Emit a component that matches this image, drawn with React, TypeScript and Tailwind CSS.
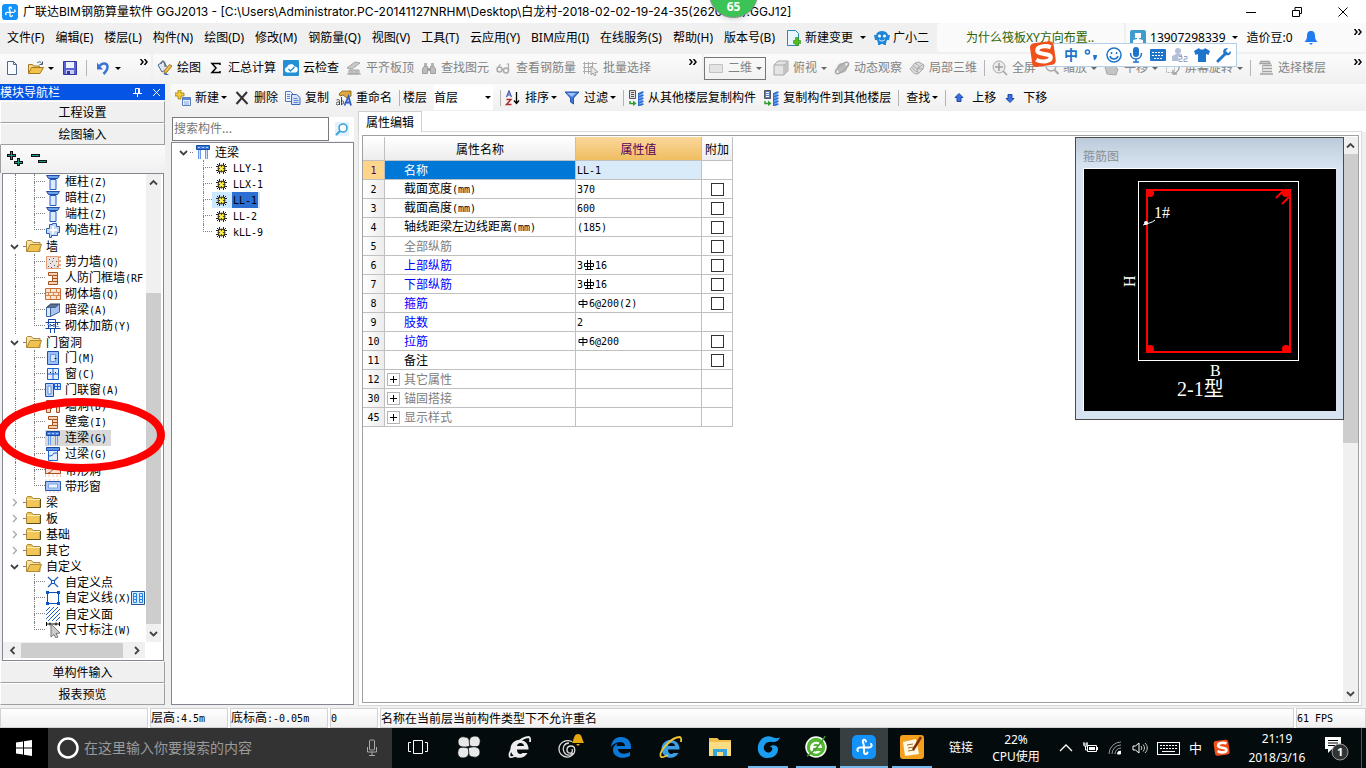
import React from 'react';

const UI = 'font-["Noto_Sans","Noto_Sans_CJK_SC",sans-serif]';
const SONG = 'font-["Noto_Sans_CJK_SC",sans-serif]';

// Half-width characters take exactly half of a 12px ideograph
const Song = ({ children }: { children: string }) => (
  <span className="whitespace-pre">
    {children.split(/([\x20-\x7e]+)/).map((part, i) =>
      i % 2 ? (
        <span key={i} className="font-['DejaVu_Sans_Mono',monospace] text-[10px]">
          {part}
        </span>
      ) : (
        part
      )
    )}
  </span>
);

type IconProps = { className?: string };

const Svg = ({ className = 'w-4 h-4', children, box = '0 0 16 16' }: IconProps & { children: React.ReactNode; box?: string }) => (
  <svg viewBox={box} className={`${className} shrink-0`} fill="none" aria-hidden="true">
    {children}
  </svg>
);

const Caret = ({ gray = false }: { gray?: boolean }) => (
  <Svg className="w-[6px] h-[3px]" box="0 0 6 3">
    <path d="M0 0h6L3 3z" fill={gray ? '#666' : '#000'} />
  </Svg>
);

const More = () => (
  <Svg className="w-[8px] h-[6px]" box="0 0 8 6">
    <path d="M.5 0l2.500 3-2.500 3M4.500 0l2.500 3-2.500 3" stroke="#000" strokeWidth="1.500" />
  </Svg>
);

const Sep = () => <span className="h-4 w-px shrink-0 bg-[#b4b4b4]" />;

/* ---------- toolbar icons ---------- */

const AppLogo = ({ className }: IconProps) => (
  <Svg className={className} box="0 0 24 24">
    <rect width="24" height="24" rx="5" fill="#1392fb" />
    <path d="M14 6.500c-.5-3-4-2-3 1 1 2 1 3 1 4.500v5c0 2.500 3 2.500 3.500.5M12 12.500H8c-2.500 0-3.500 2.500-2 3.500M12 12.500h5c2.500 0 3.500-2 2-3.500" stroke="#fff" strokeWidth="2" strokeLinecap="round" />
  </Svg>
);

const NewFileIcon = () => (
  <Svg>
    <path d="M3.500 1.500h6l3 3v10h-9z" fill="#f7fbff" stroke="#53678f" />
    <path d="M9.500 1.500v3h3" stroke="#53678f" />
  </Svg>
);

const OpenIcon = () => (
  <Svg>
    <path d="M.5 13.500v-9h4l1 1.500h6v2" fill="#f6d98a" stroke="#a87a1d" />
    <path d="M.5 13.500l3-6h12l-3.500 6z" fill="#f2c14e" stroke="#a87a1d" />
    <path d="M9 3c2-2 4-1 5 1M14.500 1.500v3h-3" stroke="#445a78" />
  </Svg>
);

const SaveIcon = () => (
  <Svg>
    <path d="M1.500 1.500h13v13h-13z" fill="#5b62d2" stroke="#32389c" />
    <path d="M4 2h8v6H4z" fill="#eef1ff" />
    <path d="M4 10h8v4H4z" fill="#c9cdf4" />
    <path d="M5 11h3v3H5z" fill="#32389c" />
  </Svg>
);

const UndoIcon = () => (
  <Svg>
    <path d="M4.500 6c3-4 8-3 8 1 0 3-2 5-4 7" stroke="#3b74d6" strokeWidth="2.500" />
    <path d="M2 2.500v7h6z" fill="#3b74d6" />
  </Svg>
);

const DrawIcon = () => (
  <Svg>
    <path d="M1 5l5-3.500L11 8l-6 4z" fill="#dfe8f2" stroke="#4f6885" />
    <path d="M4 4c0-4 4-4 4 0v3" stroke="#344a66" />
    <path d="M15 6l-5 6-3 2 .5-3.500 5-6z" fill="#f0bf4c" stroke="#a27a21" />
    <path d="M7 14l2-1 3 2H8z" fill="#2d6cc9" />
  </Svg>
);

const CloudIcon = () => (
  <Svg>
    <rect width="16" height="16" rx="1" fill="#238fd5" />
    <path d="M4 12.500a2.800 2.800 0 010-5.500 4 4 0 017.500-.5A3 3 0 0112 12.500z" fill="#fff" />
    <path d="M5.500 9l2 2 4-4" stroke="#238fd5" strokeWidth="1.500" />
  </Svg>
);

const AlignSlabIcon = () => (
  <Svg>
    <path d="M1 8l8-6 5 1-8 6zM3 10h10v4H3z" fill="#c9c9c9" stroke="#a5a5a5" />
    <path d="M1 14h14M6 10v4M10 10v4" stroke="#a5a5a5" />
  </Svg>
);

const BinocularsIcon = () => (
  <Svg>
    <path d="M3 3h3v4H3zM10 3h3v4h-3z" fill="#b5b5b5" />
    <path d="M1.500 13.500V9L3 6.500h3.500v7zM9.500 13.500v-7H13L14.500 9v4.500z" fill="#bdbdbd" stroke="#a0a0a0" />
    <path d="M6.500 8h3v3h-3z" fill="#a0a0a0" />
  </Svg>
);

const GlassesIcon = () => (
  <Svg>
    <circle cx="3.500" cy="9.500" r="2.500" stroke="#aaa" strokeWidth="1.500" />
    <circle cx="10" cy="10.500" r="2.500" stroke="#aaa" strokeWidth="1.500" />
    <path d="M1.500 8l3-4M12.500 10V4h-2M6 9.500h1.500" stroke="#aaa" strokeWidth="1.200" />
  </Svg>
);

const BatchIcon = () => (
  <Svg>
    <path d="M1.500 2v12M5.500 2v12M9.500 2v6M0 3.500h14M0 7.500h10M0 11.500h8" stroke="#ababab" />
    <path d="M8 6l7 6-3 .5 1 2.500-2 .5-1-2.500-2 2z" fill="#e6e6e6" stroke="#a2a2a2" />
  </Svg>
);

const PlaneIcon = () => (
  <Svg>
    <path d="M1.500 4.500h13v8h-13z" fill="#e3e3e3" stroke="#c2c2c2" />
  </Svg>
);

const CubeIcon = () => (
  <Svg>
    <path d="M1 5l4-4h10v10l-4 4H1z" fill="#e4e4e4" stroke="#a9a9a9" />
    <path d="M1 5h10v10M11 5l4-4" stroke="#a9a9a9" />
    <path d="M11 5l4-4v10l-4 4z" fill="#c2c2c2" />
  </Svg>
);

const OrbitIcon = () => (
  <Svg>
    <circle cx="8" cy="8" r="5" fill="#bcbcbc" />
    <ellipse cx="8" cy="8" rx="8" ry="3" stroke="#a6a6a6" strokeWidth="1.500" transform="rotate(-40 8 8)" />
  </Svg>
);

const Local3dIcon = () => (
  <Svg>
    <path d="M1 9l5-6 4-1 5 3-1 4-5 5-4-.5z" fill="#dcdcdc" stroke="#a9a9a9" />
    <path d="M4 6l4 2.500 6 .5M8 8.500l1 5M8 8.500l6-4M3 8l5 4M6 3l5 4" stroke="#a9a9a9" />
  </Svg>
);

const FullIcon = () => (
  <Svg>
    <circle cx="7" cy="7" r="6" fill="#ececec" stroke="#a9a9a9" />
    <path d="M7 3v8M3 7h8M11 11l4 4" stroke="#a0a0a0" strokeWidth="1.500" />
  </Svg>
);

const ZoomIcon = () => (
  <Svg>
    <circle cx="8" cy="6" r="5" stroke="#a9a9a9" strokeWidth="1.500" />
    <path d="M11.500 10l4 4" stroke="#a9a9a9" strokeWidth="2" />
  </Svg>
);

const HandIcon = () => (
  <Svg>
    <path d="M3 14L1 7l3-1V2h2v4l1-5h2v5l2-4 2 1-1 5 2 1-2 6z" fill="#c4c4c4" stroke="#a9a9a9" />
  </Svg>
);

const RotateIcon = () => (
  <Svg>
    <path d="M1.500 1.500h8v11h-8z" stroke="#b5b5b5" strokeDasharray="2 1" />
    <path d="M12 2c4 5 2 10-4 12M8 10v4h4" stroke="#a3a3a3" strokeWidth="1.500" />
  </Svg>
);

const FloorsIcon = () => (
  <Svg>
    <path d="M3 1.500h8l1 2H2zM5 5.500h9M5 8.500h9M5 11.500h9M2 14h13" stroke="#a3a3a3" strokeWidth="1.500" />
    <path d="M4.500 5v9" stroke="#b8b8b8" />
  </Svg>
);

const AddIcon = () => (
  <Svg>
    <path d="M3 0h3v3h3v3H6v3H3V6H0V3h3z" fill="#f2cc3a" stroke="#8d7310" strokeWidth=".7" />
    <path d="M7.500 7.500h8v8h-8z" fill="#eaf2ff" stroke="#5a7fc0" />
    <path d="M8 8h7v2H8z" fill="#5a8be0" />
    <path d="M9 12h5M9 14h5" stroke="#89a5d4" />
  </Svg>
);

const DeleteIcon = () => (
  <Svg>
    <path d="M2.500 2l11 12M13 2L2.500 14" stroke="#333" strokeWidth="2" />
  </Svg>
);

const CopyIcon = () => (
  <Svg>
    <path d="M.5 1.500h5l3 3v7h-8z" fill="#eef4ff" stroke="#5577b8" />
    <path d="M6.500 4.500h5l3.500 3v7H6.500z" fill="#d4e3fb" stroke="#3f69b8" />
    <path d="M8.500 8.500h4M8.500 10.500h5M8.500 12.500h5M2 4.500h3M2 6.500h3M2 8.500h3" stroke="#5b86cf" />
  </Svg>
);

const RenameIcon = () => (
  <Svg>
    <path d="M3 4l3-3h9v5l-4 2-4-3-3 1z" fill="#e0a83c" stroke="#7a5616" strokeWidth=".8" />
    <path d="M8.500 15.500l4-9 2.500 9M9.500 12.500H14" stroke="#2d5fc4" strokeWidth="1.800" />
    <path d="M.5 10c3-1 3 0 3 1.500v3.500M3.500 12c-3 0-4 1-3 2.500 1 1 2 0 3-1M5.500 7v8M5.500 11c3-1 3 3 0 3.500" stroke="#444" />
  </Svg>
);

const SortIcon = () => (
  <Svg>
    <path d="M1.500 7L4 1l2.500 6M2.500 5h3" stroke="#3d4fae" strokeWidth="1.200" />
    <path d="M1.500 9.500H6l-4.500 5h5" stroke="#b02c2c" strokeWidth="1.400" />
    <path d="M11.500 2v11M9 10.500l2.500 3 2.500-3" stroke="#000" strokeWidth="1.300" />
  </Svg>
);

const FilterIcon = () => (
  <Svg>
    <path d="M1 2h14L9.500 8v6l-3-2V8z" fill="#3f78dd" stroke="#2a56a8" />
    <path d="M3 3h9L8 7z" fill="#9dc1f8" />
  </Svg>
);

const FloorCopyIcon = ({ blue = false }: { blue?: boolean }) => (
  <Svg>
    <path d="M1.500.5h6v8h-6z" fill={blue ? '#4d7fd6' : '#e1e1e1'} stroke="#555" />
    <path d="M3 2.500h3M3 4.500h3M3 6.500h3" stroke={blue ? '#fff' : '#555'} />
    <path d="M2 11v2.500h3" stroke="#2f9b31" strokeWidth="1.500" />
    <path d="M5 10.500l3.500 3-3.500 2.500z" fill="#2f9b31" />
    <path d="M11 2.500l3.500-1.500v14L11 16z" fill="#7fb0f2" />
    <path d="M10.500 4l5-2M10.500 7l5-2M10.500 10l5-2M10.500 13l5-2M10.500 15.500l5-1.500" stroke="#2f6fd0" strokeWidth="1.600" />
    <path d="M10.500 3v13" stroke="#2f6fd0" />
  </Svg>
);

const ArrowIcon = ({ down = false }: { down?: boolean }) => (
  <Svg className={down ? 'w-3 h-3 rotate-180' : 'w-3 h-3'} box="0 0 12 12">
    <path d="M6 1.500l4 4H8v4H4v-4H2z" fill="#3c6fdf" stroke="#2149a6" />
  </Svg>
);

/* ---------- tree icons ---------- */

const Folder = ({ open = false }: { open?: boolean }) => (
  <Svg>
    <path d="M.5 13.500v-10l1-1h4l1.500 2h7v9z" fill={open ? '#f7e3a4' : '#f1c75a'} stroke="#b08a34" />
    {open ? <path d="M1 13.500l3-7h11.500l-3 7z" fill="#f0c24f" stroke="#b08a34" /> : <path d="M1 5.500h13" stroke="#fff0bd" />}
    {!open && <path d="M1 13.500h13.500V5" stroke="#5d4a1e" />}
  </Svg>
);

const ColumnIcon = () => (
  <Svg>
    <path d="M1.500 1.500h13l-2 3h-9z" fill="#6fa0ee" stroke="#1f4f9f" />
    <path d="M5 5.500h6v10H5z" fill="#dce9ff" stroke="#1f5cc0" />
  </Svg>
);

const StructColumnIcon = () => (
  <Svg>
    <path d="M4.500 2.500h3v-1h4v3h3v6h-2v3h-6v2h-2v-4h-3v-5h3z" fill="#c3d9fa" stroke="#2c5fae" />
    <path d="M8 4v8M5 8h7" stroke="#fff" strokeWidth="2" />
  </Svg>
);

const ShearWallIcon = () => (
  <Svg>
    <path d="M1.500 2.500h12v12h-12z" fill="#e9e4e0" stroke="#e29a72" />
    <path d="M4 5.500h1M8 4.500h1M11 7.500h1M5 9.500h1M9 11.500h1M3 12.500h1M7 7.500h1M12 12.500h1M6 13.500h1" stroke="#555" />
    <path d="M15 2v13" stroke="#c1602b" strokeDasharray="2 2" />
  </Svg>
);

const NicheIcon = () => (
  <Svg>
    <path d="M3.500 2.500h9v12h-9v-3h4v-6h-4z" fill="#f7d3b2" stroke="#a9511c" />
    <path d="M8 5.500h4M8 8.500h4M8 11.500h4" stroke="#a9511c" />
  </Svg>
);

const BrickIcon = () => (
  <Svg>
    <path d="M.5 2.500h15v11H.5z" fill="#fbe5d3" stroke="#c46a32" />
    <path d="M1 6.500h14M1 9.500h14M5.500 3v3M11.500 3v3M8.500 6v4M3.500 6v4M13.500 6v4M5.500 10v3M11.500 10v3" stroke="#d6864f" />
  </Svg>
);

const DarkBeamIcon = () => (
  <Svg>
    <path d="M1.500 5.500l4-3.500h9l-4 3.500z" fill="#5f6f8b" stroke="#2d3e5c" />
    <path d="M1.500 5.500h4v9h-4z" fill="#dbe8fb" stroke="#3f63a0" />
    <path d="M5.500 5.500h5l4-3.500v8l-9 4.500z" fill="#a9c4ec" stroke="#3f63a0" />
  </Svg>
);

const RebarWallIcon = () => (
  <Svg>
    <path d="M.5 4.500h15M.5 10.500h15M3.500 1.500h7v9M3.500 1v9M5.500 11v4M9.500 11v4M12.500 4v3" stroke="#1548a8" />
    <path d="M5 9V6l2 2 2-2v3" stroke="#1548a8" />
    <path d="M2 6.500h2M11 8.500h3" stroke="#7eabf2" />
  </Svg>
);

const DoorIcon = () => (
  <Svg>
    <path d="M2.500 1.500h11v13h-11z" fill="#9cc0f7" stroke="#1c52ae" />
    <path d="M5.500 4.500h5v7h-5z" fill="#d9e8ff" stroke="#6597e5" />
    <path d="M9.500 8.500h2" stroke="#123" />
  </Svg>
);

const WindowIcon = () => (
  <Svg>
    <path d="M2.500 2.500h11v11h-11z" fill="#e3eeff" stroke="#1c5fcc" />
    <path d="M8 3v10M3 8h10" stroke="#1c5fcc" />
    <path d="M5 6.500h1M10 6.500h1" stroke="#123" />
  </Svg>
);

const DoorWindowIcon = () => (
  <Svg>
    <path d="M.5 1.500h8v13h-8z" fill="#b9d3fa" stroke="#1c52ae" />
    <path d="M3 4h3v8H3z" fill="#fff" stroke="#5b8bd8" />
    <path d="M9.500 1.500h6v6h-6zM12.500 1.500v6M9.500 4.500h6" fill="#cfe1ff" stroke="#1c5fcc" />
  </Svg>
);

const WallHoleIcon = () => (
  <Svg>
    <path d="M1.500 2.500h13v12h-3v-8h-6v8h-4z" fill="#f9d9bf" stroke="#a9511c" />
    <path d="M6 11l4-4" stroke="#a9511c" />
  </Svg>
);

const LinkBeamIcon = () => (
  <Svg>
    <path d="M1.500 1.500h13v4h-13z" fill="#3d77dc" stroke="#174a9e" />
    <path d="M3 3.500h11" stroke="#a9c8fb" strokeDasharray="2 2" />
    <path d="M4.500 6v9M11.500 6v9" stroke="#6a9aec" strokeWidth="3" />
    <path d="M4.500 6v9M11.500 6v9" stroke="#c9ddfc" />
  </Svg>
);

const LintelIcon = () => (
  <Svg>
    <path d="M1.500 1.500h13v3h-13z" fill="#5a90ea" stroke="#174a9e" />
    <path d="M3.500 4.500h9v10h-9z" fill="#e4eeff" stroke="#1c5fcc" />
    <path d="M4 10c3 0 4-1 5-3h3" stroke="#1c5fcc" />
  </Svg>
);

const StripHoleIcon = () => (
  <Svg>
    <path d="M.5 1v14M4 1v14M8 1v14M12 1v14M15.500 1v14" stroke="#f6c4b8" />
    <path d="M.5 4.500h15v7H.5z" fill="#f9dfd0" stroke="#a9511c" />
    <path d="M3 11c3 0 4-3 5-4h5" stroke="#a9511c" />
  </Svg>
);

const StripWindowIcon = () => (
  <Svg>
    <path d="M1 1v14M5 1v14M9 1v14M13 1v14" stroke="#f6c4b8" />
    <path d="M.5 3.500h15v9H.5z" fill="#a9c7f6" stroke="#2659ad" />
    <path d="M3.500 6h9v4h-9z" fill="#edf4ff" stroke="#7aa4e4" />
  </Svg>
);

const PointIcon = () => (
  <Svg>
    <path d="M3 3l10 10M13 3L3 13" stroke="#2c5fae" strokeWidth="1.300" />
    <path d="M6.500 6.500h3v3h-3z" fill="#fff" stroke="#0b52c4" />
  </Svg>
);

const LineIcon = () => (
  <Svg>
    <path d="M2.500 2.500h11v11h-11z" stroke="#0b52c4" />
    <path d="M1 1h3v3H1zM12 1h3v3h-3zM1 12h3v3H1zM12 12h3v3h-3z" fill="#0b52c4" />
  </Svg>
);

const AreaIcon = () => (
  <Svg>
    <path d="M1 5l4-4M1 9l8-8M1 13l12-12M3 15L15 3M7 15l8-8M11 15l4-4" stroke="#1c5fcc" />
  </Svg>
);

const DimIcon = () => (
  <Svg>
    <path d="M1.500 0v4M14.500 0v4M2 2h12M5 .5v3M11 .5v3" stroke="#000" />
    <path d="M6 2l9 9-4 .5 2 3.500-2 1-2-3.500L6 15z" fill="#ccc" stroke="#777" />
  </Svg>
);

const GearIcon = () => (
  <Svg className="w-[11px] h-[11px]" box="0 0 11 11">
    <path d="M3.500 0v11M7.500 0v11M0 3.500h11M0 7.500h11M1 1l9 9M10 1l-9 9" stroke="#222" />
    <circle cx="5.500" cy="5.500" r="3.500" fill="#f3ea25" stroke="#333" />
    <path d="M5.500 2v7M2 5.500h7" stroke="#444" />
    <circle cx="5.500" cy="5.500" r="1.500" fill="#fff36b" />
  </Svg>
);

const Chevron = ({ dir, className = 'w-[9px] h-[9px]' }: IconProps & { dir: 'up' | 'down' | 'left' | 'right' | 'closed' }) => {
  const d = { up: 'M1 6.500L4.500 3 8 6.500', down: 'M1 3l3.500 3.500L8 3', left: 'M6.500 1L3 4.500 6.500 8', right: 'M3 1l3.500 3.500L3 8', closed: 'M3 1l3.500 3.500L3 8' }[dir];
  return (
    <Svg className={className} box="0 0 9 9">
      <path d={d} stroke={dir === 'closed' ? '#a6a6a6' : '#444'} strokeWidth={dir === 'closed' ? 1.3 : 1.8} />
    </Svg>
  );
};

/* ---------- data ---------- */

const menus = ['文件(F)', '编辑(E)', '楼层(L)', '构件(N)', '绘图(D)', '修改(M)', '钢筋量(Q)', '视图(V)', '工具(T)', '云应用(Y)', 'BIM应用(I)', '在线服务(S)', '帮助(H)', '版本号(B)'];

type Leaf = { name: string; icon: React.FC; active?: boolean; extra?: boolean };
type Group = { name?: string; items?: Leaf[] };

const navTree: Group[] = [
  {
    items: [
      { name: '框柱(Z)', icon: ColumnIcon },
      { name: '暗柱(Z)', icon: ColumnIcon },
      { name: '端柱(Z)', icon: ColumnIcon },
      { name: '构造柱(Z)', icon: StructColumnIcon },
    ],
  },
  {
    name: '墙',
    items: [
      { name: '剪力墙(Q)', icon: ShearWallIcon },
      { name: '人防门框墙(RF', icon: NicheIcon },
      { name: '砌体墙(Q)', icon: BrickIcon },
      { name: '暗梁(A)', icon: DarkBeamIcon },
      { name: '砌体加筋(Y)', icon: RebarWallIcon },
    ],
  },
  {
    name: '门窗洞',
    items: [
      { name: '门(M)', icon: DoorIcon },
      { name: '窗(C)', icon: WindowIcon },
      { name: '门联窗(A)', icon: DoorWindowIcon },
      { name: '墙洞(D)', icon: WallHoleIcon },
      { name: '壁龛(I)', icon: NicheIcon },
      { name: '连梁(G)', icon: LinkBeamIcon, active: true },
      { name: '过梁(G)', icon: LintelIcon },
      { name: '带形洞', icon: StripHoleIcon },
      { name: '带形窗', icon: StripWindowIcon },
    ],
  },
  { name: '梁' },
  { name: '板' },
  { name: '基础' },
  { name: '其它' },
  {
    name: '自定义',
    items: [
      { name: '自定义点', icon: PointIcon },
      { name: '自定义线(X)', icon: LineIcon, extra: true },
      { name: '自定义面', icon: AreaIcon },
      { name: '尺寸标注(W)', icon: DimIcon },
    ],
  },
];

const components = ['LLY-1', 'LLX-1', 'LL-1', 'LL-2', 'kLL-9'];

type Row = { no: number; name: string; value?: string; check?: boolean; tone?: 'blue' | 'gray'; plus?: boolean; grade?: number };

const rows: Row[] = [
  { no: 1, name: '名称', value: 'LL-1' },
  { no: 2, name: '截面宽度(mm)', value: '370', check: true },
  { no: 3, name: '截面高度(mm)', value: '600', check: true },
  { no: 4, name: '轴线距梁左边线距离(mm)', value: '(185)', check: true },
  { no: 5, name: '全部纵筋', check: true, tone: 'gray' },
  { no: 6, name: '上部纵筋', value: '3|16', check: true, tone: 'blue', grade: 2 },
  { no: 7, name: '下部纵筋', value: '3|16', check: true, tone: 'blue', grade: 2 },
  { no: 8, name: '箍筋', value: '|6@200(2)', check: true, tone: 'blue', grade: 1 },
  { no: 9, name: '肢数', value: '2', tone: 'blue' },
  { no: 10, name: '拉筋', value: '|6@200', check: true, tone: 'blue', grade: 1 },
  { no: 11, name: '备注', check: true },
  { no: 12, name: '其它属性', tone: 'gray', plus: true },
  { no: 30, name: '锚固搭接', tone: 'gray', plus: true },
  { no: 45, name: '显示样式', tone: 'gray', plus: true },
];

/* ---------- bars ---------- */

type ToolProps = { icon?: React.ReactNode; label?: string; caret?: boolean; off?: boolean; tight?: boolean };

const Tool = ({ icon, label, caret, off, tight }: ToolProps) => (
  <button className={`flex shrink-0 items-center whitespace-nowrap ${off ? 'text-[#838383]' : ''}`} aria-label={label ? undefined : '工具'}>
    {icon}
    {label && <span className={icon ? 'ml-1' : ''}>{label}</span>}
    {caret && <span className={tight ? 'ml-0.5' : 'ml-1'}><Caret gray={off} /></span>}
  </button>
);

const TitleBar = () => (
  <header className="flex h-[23px] shrink-0 items-center bg-white pl-0.5">
    <AppLogo className="w-4 h-4" />
    <h1 className="ml-[5px] flex-1 truncate font-['Inter','Noto_Sans_CJK_SC',sans-serif]">
      广联达BIM钢筋算量软件 GGJ2013 - [C:\Users\Administrator.PC-20141127NRHM\Desktop\白龙村-2018-02-02-19-24-35(2620180).GGJ12]
    </h1>
    <div className="flex">
      {['M0 5.500h10', 'M.5 3.500h7v6h-7zM3 3V.5h6.500v6H8', 'M.5 .5l9 9M9.500 .5l-9 9'].map((d, i) => (
        <button key={d} className="flex w-[46px] justify-center" aria-label={['最小化', '还原', '关闭'][i]}>
          <Svg className="w-[10px] h-[10px]" box="0 0 10 10">
            <path d={d} stroke="#000" />
          </Svg>
        </button>
      ))}
    </div>
  </header>
);

const MenuBar = () => (
  <nav className="flex h-[31px] shrink-0 items-center overflow-hidden bg-[#f0f0f0] pb-0.5 whitespace-nowrap">
    <div className="flex items-center gap-[11px] pl-[7px]">
      {menus.map((m) => (
        <button key={m}>{m}</button>
      ))}
    </div>
    <button className="ml-[10px] flex items-center gap-[4px]">
      <Svg>
        <path d="M2.500.5h8l3 3v12h-11z" fill="#eaf6ff" stroke="#2b87b8" />
        <path d="M10.500 7.500h3v3h2v3h-2v2h-3v-2h-2v-3h2z" fill="#4fbf22" stroke="#2b8a10" strokeWidth=".6" />
      </Svg>
      新建变更
      <span className="ml-[3px]"><Caret /></span>
    </button>
    <button className="ml-[8px] flex items-center gap-[3px]">
      <Svg>
        <path d="M0 5h2c1-3 3-4 6-4s5 1 6 4h2l-1 5h-2l-1 3v2h-2l-1-1H7l-1 1H4v-2l-1-3H1z" fill="#1f86d8" />
        <circle cx="5.500" cy="6" r="1.500" fill="#fff" />
        <circle cx="10.500" cy="6" r="1.500" fill="#fff" />
        <path d="M5 9.500c2 2 4 2 6 0" stroke="#fff" />
      </Svg>
      广小二
    </button>
    <a href="#help" className="ml-[8px] flex h-full w-[187px] items-center rounded-sm bg-[#fafafa] pl-[29px] text-[#2e6300]">
      为什么筏板XY方向布置..
    </a>
    <div className="ml-[2px] flex h-full flex-1 items-center bg-[#fafafa] pl-1">
      <button className="flex items-center gap-1">
        <Svg>
          <rect width="16" height="16" rx="2" fill="#3f9ccc" />
          <path d="M5 3h6v5H9v1l4 1v3H3v-3l4-1V8H5z" fill="#fff" />
        </Svg>
        13907298339
        <span className="ml-0.5"><Caret /></span>
      </button>
      <span className="ml-[9px]">造价豆:0</span>
      <Svg className="ml-[10px] w-4 h-4">
        <path d="M8 1c3 0 4 2 4 5 0 3 1 4 2.500 6h-13C3 10 4 9 4 6c0-3 1-5 4-5z" fill="#1f7cf0" />
        <path d="M6 13h4l-2 2z" fill="#1f7cf0" />
      </Svg>
      <span className="mr-[4px] mb-3 ml-auto"><More /></span>
    </div>
  </nav>
);

const barBg = 'bg-linear-to-b from-[#fbfbfb] to-[#f0f0f0]';

const ToolBar = () => (
  <div className="flex h-[30px] shrink-0 gap-[2px] overflow-hidden bg-[#f0f0f0]">
    <div className={`flex w-[151px] shrink-0 items-center pb-0.5 pl-1 ${barBg}`}>
      <div className="flex items-center gap-[8px]">
        <Tool icon={<NewFileIcon />} />
        <Tool icon={<OpenIcon />} caret />
        <Tool icon={<SaveIcon />} />
        <Sep />
        <Tool icon={<UndoIcon />} caret />
      </div>
      <span className="mr-[3px] mb-3 ml-auto"><More /></span>
    </div>
    <div className={`flex w-[549px] shrink-0 items-center gap-[7px] pb-0.5 pl-1 ${barBg}`}>
      <Tool icon={<DrawIcon />} label="绘图" />
      <Tool
        icon={
          <Svg>
            <path d="M12 5V3.500H4l4 4.500-4 4.500h8V11" stroke="#000" strokeWidth="1.500" />
          </Svg>
        }
        label="汇总计算"
      />
      <Tool icon={<CloudIcon />} label="云检查" />
      <Tool off icon={<AlignSlabIcon />} label="平齐板顶" />
      <Tool off icon={<BinocularsIcon />} label="查找图元" />
      <Tool off icon={<GlassesIcon />} label="查看钢筋量" />
      <Tool off icon={<BatchIcon />} label="批量选择" />
      <span className="mr-[5px] mb-3 ml-auto"><More /></span>
    </div>
    <div className={`flex min-w-0 flex-1 items-center gap-[7px] pb-0.5 ${barBg}`}>
      <div className="flex h-[23px] w-[62px] shrink-0 items-center justify-center border border-[#777]">
        <Tool off icon={<PlaneIcon />} label="二维" caret />
      </div>
      <Tool off icon={<CubeIcon />} label="俯视" caret />
      <Tool off icon={<OrbitIcon />} label="动态观察" />
      <Tool off icon={<Local3dIcon />} label="局部三维" />
      <Sep />
      <Tool off icon={<FullIcon />} label="全屏" />
      <Tool off icon={<ZoomIcon />} label="缩放" caret />
      <Tool off icon={<HandIcon />} label="平移" caret />
      <Tool off icon={<RotateIcon />} label="屏幕旋转" caret />
      <Sep />
      <Tool off icon={<FloorsIcon />} label="选择楼层" />
      <span className="mr-[4px] mb-3 ml-auto"><More /></span>
    </div>
  </div>
);

const ComponentBar = () => (
  <div className={`flex h-[27px] shrink-0 items-center gap-[7px] pl-1 ${barBg}`}>
    <Tool icon={<AddIcon />} label="新建" caret tight />
    <Tool icon={<DeleteIcon />} label="删除" />
    <Tool icon={<CopyIcon />} label="复制" />
    <Tool icon={<RenameIcon />} label="重命名" />
    <div className="flex items-center gap-[3px]">
      <Sep />
      <label htmlFor="floor">楼层</label>
    </div>
    <div className="relative flex h-[25px] w-[59px] items-center bg-white">
      <select id="floor" className="h-full w-full appearance-none bg-white">
        <option>首层</option>
      </select>
      <span className="pointer-events-none absolute right-[2px] flex h-4 items-center"><Caret /></span>
    </div>
    <div className="flex items-center gap-[4px]">
      <Sep />
      <Tool icon={<SortIcon />} label="排序" caret tight />
    </div>
    <Tool icon={<FilterIcon />} label="过滤" caret tight />
    <div className="flex items-center gap-[4px]">
      <Sep />
      <Tool icon={<FloorCopyIcon />} label="从其他楼层复制构件" />
    </div>
    <Tool icon={<FloorCopyIcon blue />} label="复制构件到其他楼层" />
    <Sep />
    <Tool label="查找" caret tight />
    <Sep />
    <div className="flex gap-[8px]">
      <button className="flex items-center gap-[7px]"><ArrowIcon />上移</button>
      <button className="flex items-center gap-[7px]"><ArrowIcon down />下移</button>
    </div>
  </div>
);

/* ---------- left navigation ---------- */

const NavButton = ({ children }: { children: string }) => (
  <button className="h-[22px] w-full shrink-0 border border-t-white border-r-[#a0a0a0] border-b-[#a0a0a0] border-l-white bg-[#f0f0f0] text-center">
    {children}
  </button>
);

const Elbow = ({ last, className }: { last: boolean; className: string }) => (
  <span className={`flex h-4 shrink-0 flex-col ${className}`}>
    <span className="h-2 border-b border-l border-dotted border-[#808080]" />
    {!last && <span className="h-2 border-l border-dotted border-[#808080]" />}
  </span>
);

const NavTree = () => (
  <ul className="min-w-0 flex-1 overflow-hidden">
    {navTree.map((group, g) => (
      <li key={g}>
        {group.name && (
          <div className="flex h-4 items-center pl-[7px]">
            <Chevron dir={group.items ? 'down' : 'closed'} />
            <span className="mr-px ml-[4px] w-[2px] border-t border-dotted border-[#808080]" />
            <Folder open={!!group.items} />
            <span className="ml-1">{group.name}</span>
          </div>
        )}
        {group.items && (
          <ul>
            {group.items.map((item, i) => {
              const Icon = item.icon;
              return (
                <li key={item.name} className="flex h-4 items-center pl-[12px]">
                  <span className={`h-4 w-[19px] shrink-0 border-l border-dotted ${g === navTree.length - 1 ? 'border-transparent' : 'border-[#808080]'}`} />
                  <Elbow last={i === group.items!.length - 1} className="w-[11px]" />
                  <span className={`flex h-4 items-center gap-1 ${item.active ? 'bg-[#d9d9d9] pr-1' : ''}`}>
                    <Icon />
                    <Song>{item.name}</Song>
                  </span>
                  {item.extra && (
                    <Svg className="w-[14px] h-[14px]" box="0 0 14 14">
                      <path d="M.5.500h13v13H.5z" fill="#d6e9ff" stroke="#24568f" />
                      <path d="M2.500 2.500h3v9h-3zM8.500 2.500h3v9h-3zM3 5.500h2M3 8.500h2M9 5.500h2M9 8.500h2" stroke="#2384e8" />
                    </Svg>
                  )}
                </li>
              );
            })}
          </ul>
        )}
      </li>
    ))}
  </ul>
);

const NavPanel = () => (
  <aside className={`flex w-[165px] shrink-0 flex-col pb-px ${SONG}`}>
    <div className="mb-px flex h-[16px] shrink-0 items-center bg-[#0554e3] text-white">
      <h2 className="flex-1">模块导航栏</h2>
      <button className="mr-[10px]" aria-label="固定">
        <Svg className="w-[9px] h-[9px]" box="0 0 9 9">
          <path d="M2.500 5V.5h4V5M0 5.500h9M4.500 6v3M5.500 1v4" stroke="#fff" />
        </Svg>
      </button>
      <button className="mr-[4px]" aria-label="关闭面板">
        <Svg className="w-[9px] h-[9px]" box="0 0 9 9">
          <path d="M1 1l7 7M8 1L1 8" stroke="#fff" />
        </Svg>
      </button>
    </div>
    <NavButton>工程设置</NavButton>
    <NavButton>绘图输入</NavButton>
    <div className={`flex h-[28px] shrink-0 items-center gap-2 border-l border-[#a0a0a0] pl-1.5 ${barBg}`}>
      <button aria-label="全部展开">
        <Svg>
          <path d="M4.500 0v9M0 4.500h9M11.500 7v8M7 11.500h9" stroke="#111" strokeWidth="3" />
          <path d="M4.500 1v7M1 4.500h7M11.500 8v6M8 11.500h7" stroke="#1b9a8a" />
        </Svg>
      </button>
      <button aria-label="全部折叠">
        <Svg>
          <path d="M0 4.500h9M7 10.500h9" stroke="#111" strokeWidth="3" />
          <path d="M1 4.500h7M8 10.500h7" stroke="#1b9a8a" />
        </Svg>
      </button>
    </div>
    <div className="mx-0.5 mr-px flex min-h-0 flex-1 flex-col border border-[#828790] bg-white">
      <div className="flex min-h-0 flex-1">
        <NavTree />
        <div className="mr-0.5 flex w-[15px] shrink-0 flex-col items-center justify-between bg-[#f0f0f0] py-1">
          <Chevron dir="up" />
          <span className="mt-[106px] mb-[5px] w-full flex-1 bg-[#cdcdcd]" />
          <Chevron dir="down" />
        </div>
      </div>
      <div className="mr-[18px] mb-0.5 flex h-[16px] shrink-0 items-center bg-[#f0f0f0] pr-1 pl-[5px]">
        <Chevron dir="left" />
        <span className="mr-[9px] ml-[4px] h-[15px] flex-1 bg-[#cdcdcd]" />
        <Chevron dir="right" />
      </div>
    </div>
    <NavButton>单构件输入</NavButton>
    <NavButton>报表预览</NavButton>
  </aside>
);

/* ---------- component list ---------- */

const ComponentPanel = () => (
  <section className={`flex w-[183px] shrink-0 flex-col pt-[6px] pb-px ${SONG}`}>
    <div className="flex h-[24px] shrink-0 items-center">
      <input
        type="text"
        aria-label="搜索构件"
        placeholder="搜索构件..."
        className="ml-px h-full w-[157px] border border-[#7a7a7a] bg-white px-px pb-1 placeholder:text-[#777]"
      />
      <button className="flex h-full flex-1 items-center justify-center bg-white" aria-label="搜索">
        <Svg className="w-[14px] h-[14px]" box="0 0 14 14">
          <rect width="14" height="14" fill="#e3f2fc" />
          <circle cx="8" cy="6" r="4" stroke="#3ba0dc" strokeWidth="1.600" fill="#fff" />
          <path d="M5 9l-4 4" stroke="#3ba0dc" strokeWidth="2" />
        </Svg>
      </button>
    </div>
    <div className="mt-px flex-1 border border-[#828790] bg-white pt-px pl-[7px]">
      <div className="flex h-4 items-center">
        <Chevron dir="down" />
        <span className="mx-[2px] w-[3px] border-t border-dotted border-[#808080]" />
        <LinkBeamIcon />
        <span className="ml-[4px]">连梁</span>
      </div>
      <ul className="pl-[24px]">
        {components.map((name, i) => (
          <li key={name} className="flex h-4 items-center">
            <Elbow last={i === components.length - 1} className="w-[9px]" />
            <span className={`flex h-4 items-center gap-[5px] pl-1 ${name === 'LL-1' ? 'bg-[#cce8ff] pr-[2px]' : ''}`}>
              <GearIcon />
              <span className={`flex h-4 items-center px-px ${name === 'LL-1' ? 'bg-[#2a6fd1]' : ''}`}>
                <Song>{name}</Song>
              </span>
            </span>
          </li>
        ))}
      </ul>
    </div>
  </section>
);

/* ---------- property editor ---------- */

const Grade = ({ n }: { n: number }) => (
  <Svg className="mx-px w-[10px] h-[10px]" box="0 0 10 10">
    <path d={n === 2 ? 'M.5 3.500h9v3h-9zM3.500 0v9M6.500 0v9M1 9.500h8' : 'M1 3.500h8v3H1zM5 1v9'} stroke="#000" />
  </Svg>
);

const cell = 'border-r border-b border-[#c0c0c0] p-0 font-normal';

const PropertyTable = () => (
  <table className="h-fit w-[370px] shrink-0 table-fixed border-separate border-spacing-0">
    <colgroup>
      <col className="w-[22px]" />
      <col className="w-[191px]" />
      <col className="w-[126px]" />
      <col className="w-[31px]" />
    </colgroup>
    <thead>
      <tr className="h-[24px] bg-linear-to-b from-white to-[#ececec]">
        <th className={cell} aria-label="序号" />
        <th className={cell}>属性名称</th>
        <th className={`${cell} bg-linear-to-b from-[#fbd79b] to-[#f0be60] text-[#58005c]`}>属性值</th>
        <th className={cell}>附加</th>
      </tr>
    </thead>
    <tbody>
      {rows.map((r) => {
        const selected = r.no === 1;
        const [before, after] = (r.value ?? '').split('|');
        return (
          <tr key={r.no} className="h-[19px]">
            <th className={`${cell} ${selected ? 'bg-[#ffd58c] text-[#58005c]' : 'bg-linear-to-r from-white to-[#ececec]'}`}>
              <Song>{String(r.no)}</Song>
            </th>
            <td className={`${cell} ${selected ? 'bg-[#0078d7] text-white' : ''} ${r.tone === 'blue' ? 'text-[#0000ff]' : ''} ${r.tone === 'gray' ? 'text-[#808080]' : ''}`}>
              <div className="flex h-[18px] items-center pl-[2px]">
                <span className="flex w-[17px]">
                  {r.plus && (
                    <button aria-label={`展开${r.name}`}>
                      <Svg className="w-[13px] h-[13px]" box="0 0 13 13">
                        <rect x=".5" y=".5" width="12" height="12" stroke="#b4b4b4" />
                        <path d="M3 6.500h7M6.500 3v7" stroke="#000" />
                      </Svg>
                    </button>
                  )}
                </span>
                <Song>{r.name}</Song>
              </div>
            </td>
            <td className={`${cell} ${selected ? 'bg-[#d9eaf9]' : ''}`}>
              <div className="flex h-[18px] items-center pl-px">
                <Song>{before}</Song>
                {r.grade && <Grade n={r.grade} />}
                {after && <Song>{after}</Song>}
              </div>
            </td>
            <td className={cell}>
              {r.check && (
                <div className="flex h-[18px] items-center justify-center">
                  <input type="checkbox" aria-label={`${r.name}附加`} className="h-[13px] w-[13px] appearance-none border border-[#333] bg-white" />
                </div>
              )}
            </td>
          </tr>
        );
      })}
    </tbody>
  </table>
);

const StirrupWindow = () => (
  <figure className="relative -mr-px ml-auto h-[283px] w-[269px] shrink-0 border border-[#4a4a4a] bg-linear-to-b from-[#bccbda] to-[#d7e3f0] to-10% px-[7px]">
    <figcaption className="flex h-[30px] items-end pb-1 text-[#8b8f94]">箍筋图</figcaption>
    <svg viewBox="0 0 252 242" className="h-[243px] w-[253px] border-t border-l border-white bg-black" fill="none" role="img" aria-label="2-1型箍筋">
      <rect x="54.500" y="12.500" width="160" height="179" stroke="#fff" />
      <rect x="63" y="21" width="143" height="162" stroke="#f00" strokeWidth="2" />
      <g fill="#f00">
        <circle cx="66" cy="24" r="4" />
        <circle cx="202" cy="24" r="4" />
        <circle cx="66" cy="180" r="4" />
        <circle cx="202" cy="180" r="4" />
      </g>
      <path d="M199 22l-7 7M205 28l-7 7" stroke="#f00" strokeWidth="2" />
      <path d="M59 56c5-2 9-2 12-5" stroke="#fff" />
      <circle cx="62" cy="54" r="2" fill="#fff" />
      <g fill="#fff" className="font-['Liberation_Serif','Noto_Sans_CJK_SC',serif] text-[16px]">
        <text x="70" y="49">1#</text>
        <text x="126" y="207">B</text>
        <text x="51" y="118" transform="rotate(-90 51 118)">H</text>
        <text x="93" y="227" className="text-[20px]">2-1型</text>
      </g>
    </svg>
  </figure>
);

const PropertyPanel = () => (
  <section className={`flex min-w-0 flex-1 flex-col ${SONG}`}>
    <div className="flex h-[21px] shrink-0 bg-white">
      <button className="w-[64px] border border-b-0 border-[#d0d0d0] bg-white">属性编辑</button>
      <span className="mr-[4px] flex-1 border-b border-[#d9d9d9]" />
    </div>
    <div className="mr-[4px] flex min-h-0 flex-1 border border-t-0 border-[#d9d9d9] bg-white p-[3px] pr-[2px] pb-[2px]">
      <div className="flex min-w-0 flex-1 border border-[#a0a0a0] pt-px">
        <PropertyTable />
        <StirrupWindow />
        <div className="flex w-[15px] shrink-0 flex-col items-center bg-[#f0f0f0] py-1">
          <Chevron dir="up" />
          <span className="mt-[4px] h-[289px] w-full bg-[#cdcdcd]" />
          <span className="mt-auto"><Chevron dir="down" /></span>
        </div>
      </div>
    </div>
  </section>
);

const StatusBar = () => (
  <footer className={`mt-[2px] flex h-[20px] shrink-0 gap-[2px] bg-white ${SONG}`}>
    {[
      ['', 'w-[148px]'],
      ['层高:4.5m', 'w-[78px]'],
      ['底标高:-0.05m', 'w-[98px]'],
      ['0', 'w-[48px]'],
      ['名称在当前层当前构件类型下不允许重名', 'flex-1'],
      ['61 FPS', 'w-[70px]'],
    ].map(([text, width]) => (
      <span key={width} className={`flex items-center border border-[#d2d2d2] bg-linear-to-b from-white to-[#f0f0f0] ${width}`}>
        <Song>{text}</Song>
      </span>
    ))}
  </footer>
);

/* ---------- task bar ---------- */

const Edge = () => (
  <Svg className="w-6 h-6" box="0 0 24 24">
    <path d="M2 12C3 4 8 2 12 2c6 0 10 4 10 10v2H9c0 5 7 6 12 3v4C13 25 4 22 4 15c0-4 3-6 5-7-1 1-1.500 2-1.500 3H16c0-6-10-5-14 1z" fill="#0a78d7" />
  </Svg>
);

const EGlyph = ({ color, ring }: { color: string; ring: string }) => (
  <Svg className="w-6 h-6" box="0 0 24 24">
    <path d="M20.500 14.500a9 9 0 10-1 3.500h-5c-2 2-5.500 1-5.500-3.500z" fill={color} />
    <path d="M9 11c0-4 7-4 7 0z" fill="#030b0d" />
    <path d="M2 22c-3-5 10-20 19-20 2 1 1 3 1 5M2 22c2 1 5-1 7-2" stroke={ring} strokeWidth="1.800" />
  </Svg>
);

const SogouS = ({ className }: IconProps) => (
  <Svg className={className} box="0 0 28 28">
    <rect x="2" y="2" width="23" height="23" rx="4" fill="#f1501b" transform="rotate(-8 14 14)" />
    <path d="M21 7c-5-2-13-1-13 3 0 5 13 2 13 7 0 4-9 5-14 2" stroke="#fff" strokeWidth="4" />
  </Svg>
);

const taskIcons: React.ReactNode[] = [
  <Svg key="view" className="w-5 h-5" box="0 0 20 20">
    <path d="M5.500 3.500h9v13h-9zM3 5.500H.5v9H3M17 5.500h2.500v9H17" stroke="#fff" />
  </Svg>,
  <Svg key="fan" className="w-6 h-6" box="0 0 24 24">
    <g fill="#e8e8e8" stroke="#030b0d" strokeWidth=".8">
      <path d="M13 11C5 14 1 11 1 7s3-6 7-5c4 0 5 4 5 9z" />
      <path d="M13 11c-2-6 0-10 5-10 4 0 6 3 5 7 0 3-3 5-10 3z" />
      <path d="M11 13c8-3 12 0 12 4s-3 6-7 5c-4 0-5-4-5-9z" />
      <path d="M11 13c2 6 0 10-5 10-4 0-6-3-5-7 0-3 3-5 10-3z" />
    </g>
  </Svg>,
  <EGlyph key="e1" color="#ededed" ring="#ededed" />,
  <Svg key="bell" className="w-7 h-7" box="0 0 28 28">
    <path d="M15 8.500C8 6 2 10 2 16s7 10 12 7 5-10 0-10-5 6-2 7 4-2 3-4M12 10c-5 0-7 5-5 9s7 4 9 1" stroke="#ddd" strokeWidth="1.300" />
    <path d="M21 1c4 0 4 5 6 9H15c2-4 2-9 6-9zM19 11h4l-2 2z" fill="#e4a70c" />
  </Svg>,
  <Edge key="edge" />,
  <EGlyph key="ie" color="#3b9fe8" ring="#f3c531" />,
  <Svg key="folder" className="w-6 h-6" box="0 0 24 24">
    <path d="M1 3h8l2 2h12v16H1z" fill="#fbdc83" />
    <path d="M1 3h8l2 2h12v2H1z" fill="#f0bf4a" />
    <path d="M5 21v-7h14v7h-4v-4H9v4z" fill="#35a5dc" />
  </Svg>,
  <Svg key="g" className="w-6 h-6" box="0 0 24 24">
    <path d="M24 2c-1 4-4 5.500-8 5-5-1-9 3-8 7s6 5 8 1c1-2 0-3-2-3 2-3 8-2 8 2 0 6-5 9-10 9C4 23 1 17 2 11S9-1 16 2c3 1 5 2 8 0z" fill="#1b9df0" />
  </Svg>,
  <Svg key="green" className="w-6 h-6" box="0 0 24 24">
    <circle cx="12" cy="12" r="10" fill="#53b832" stroke="#fff" strokeWidth="1.500" />
    <path d="M18 13a6 6 0 10-1 3h-4c-2 1-4 0-4-3z" fill="#fff" />
    <path d="M9.500 11c0-3 5-3 5 0z" fill="#53b832" />
    <path d="M3 21C8 18 18 8 21 1" stroke="#3c9a22" strokeWidth="1.500" />
  </Svg>,
  <AppLogo key="app" className="w-6 h-6" />,
  <Svg key="note" className="w-6 h-6" box="0 0 24 24">
    <rect width="24" height="24" rx="3" fill="#f2a01d" />
    <path d="M3 7l13-3 3 15-14 2z" fill="#fff8e4" />
    <path d="M7 10l6-1M8 13l5-1M8 16l6-1" stroke="#a66c22" />
    <path d="M21 2l-8 13" stroke="#7c2f0b" strokeWidth="2.500" />
  </Svg>,
];

const TaskBar = () => (
  <footer className="flex h-10 shrink-0 items-stretch bg-[#030b0d] text-white">
    <button className="flex w-12 items-center justify-center bg-black" aria-label="开始">
      <Svg>
        <path d="M0 2.500l7-1v6H0zM8 1.300L16 0v7.500H8zM0 8.500h7v6l-7-1zM8 8.500h8V16l-8-1.300z" fill="#fff" />
      </Svg>
    </button>
    <label className="flex w-[344px] items-center bg-[#333] pr-[13px] pl-[8px]">
      <Svg className="w-6 h-6" box="0 0 24 24">
        <circle cx="12" cy="12" r="9.500" stroke="#fff" strokeWidth="2.500" />
      </Svg>
      <input type="text" aria-label="搜索" placeholder="在这里输入你要搜索的内容" className="ml-1 min-w-0 flex-1 bg-transparent text-[14px] placeholder:text-[#9a9a9a]" />
      <Svg className="w-[14px] h-[18px]" box="0 0 14 18">
        <rect x="4.500" y="1" width="5" height="10" rx="1" stroke="#aaa" />
        <path d="M2.500 8v5h9V8M7 13v3M4 16.500h6" stroke="#aaa" />
      </Svg>
    </label>
    <div className="flex">
      {taskIcons.map((icon, i) => (
        <button
          key={i}
          aria-label={`任务${i + 1}`}
          className={`flex flex-col items-center ${i < 4 ? 'w-[51px]' : i < 6 ? 'w-[50px]' : 'w-12'} ${i === 9 ? 'bg-[#363f42]' : ''}`}
        >
          <span className="flex flex-1 items-center">{icon}</span>
          <span className={`h-0.5 ${i === 9 ? 'w-full' : 'w-10'} ${i > 6 ? 'bg-[#76b9ed]' : ''}`} />
        </button>
      ))}
    </div>
    <div className="ml-auto flex items-center">
      <span>链接</span>
      <span className="ml-[18px] flex w-[50px] flex-col text-center leading-[17px]">
        <span>22%</span>
        <span>CPU使用</span>
      </span>
      <div className="ml-[18px] flex items-center gap-[9px]">
        <Svg className="w-[14px] h-[8px]" box="0 0 14 8">
          <path d="M1 7l6-6 6 6" stroke="#fff" strokeWidth="1.300" />
        </Svg>
        <Svg>
          <path d="M5.500 5.500h9v6h-9zM15.500 7v3M1 4h5M2 2v2M5 2v2M2 4v2h3V4M3.500 6v4H5" stroke="#fff" />
          <path d="M7 7h6v3H7z" fill="#fff" />
        </Svg>
        <Svg>
          <path d="M2 14A12 12 0 0114 2M5 14a9 9 0 019-9M8 14a6 6 0 016-6" stroke="#999" />
          <path d="M10.500 14a3 3 0 013-3v3z" fill="#fff" stroke="#fff" />
        </Svg>
        <Svg>
          <path d="M1 6h2.500L7 3v10l-3.500-3H1z" stroke="#fff" />
          <path d="M9 6c1 1 1 3 0 4M11 4.500c2 2 2 5 0 7M13 3c3 3 3 7 0 10" stroke="#ccc" />
        </Svg>
        <Svg className="w-[23px] h-[13px]" box="0 0 23 13">
          <rect x=".5" y=".5" width="22" height="12" stroke="#fff" />
          <path d="M3 3.500h17M3 6.500h17" stroke="#fff" strokeDasharray="2 1" />
          <path d="M5 9.500h13" stroke="#fff" />
        </Svg>
        <span className="text-[13px]">中</span>
        <SogouS className="ml-0.5 w-[18px] h-[18px]" />
      </div>
      <time className="ml-[14px] flex w-[64px] flex-col text-center leading-[19px]">
        <span>21:19</span>
        <span>2018/3/16</span>
      </time>
      <button className="ml-[14px] mr-[12px]" aria-label="通知">
        <Svg className="w-[26px] h-[26px]" box="0 0 26 26">
          <path d="M2 2h16v12H9l-4 4v-4H2z" fill="#fff" />
          <path d="M5 5.500h10M5 8h10M5 10.500h7" stroke="#000" />
          <circle cx="17" cy="17" r="8" fill="#333" stroke="#999" />
          <text x="14" y="21" fill="#fff" fontSize="11" fontWeight="bold">1</text>
        </Svg>
      </button>
      <span className="mr-1 h-10 w-px bg-[#555]" />
    </div>
  </footer>
);

/* ---------- floating widgets ---------- */

const InputMethodBar = () => (
  <div className="absolute top-[43px] right-[129px] flex h-[24px] w-[197px] items-center gap-[6px] border border-[#b5cfe6] bg-white pl-[23px] text-[#1f74cc]">
    <SogouS className="absolute top-[-4px] left-[-12px] w-[29px] h-[29px]" />
    <span className="text-[14px] font-bold">中</span>
    <Svg>
      <circle cx="3.500" cy="5" r="2" stroke="#1f74cc" strokeWidth="1.500" />
      <path d="M9 8h4c0 3-1 4-3 5.500z" fill="#1f74cc" />
    </Svg>
    <Svg>
      <circle cx="8" cy="8" r="7" stroke="#1f74cc" strokeWidth="1.500" />
      <path d="M5.500 5v2M10.500 5v2M4 9c1 4 7 4 8 0" stroke="#1f74cc" strokeWidth="1.500" />
    </Svg>
    <Svg>
      <rect x="5" y="0" width="6" height="10" rx="3" fill="#1f74cc" />
      <path d="M2.500 6c0 8 11 8 11 0M8 12v3M5 15h6" stroke="#1f74cc" strokeWidth="1.500" />
    </Svg>
    <Svg>
      <rect y="2" width="16" height="12" rx="1" fill="#1f74cc" />
      <path d="M2 5.500h12M2 8.500h12M4 11.500h8" stroke="#fff" strokeDasharray="2 1" />
    </Svg>
    <Svg>
      <circle cx="6" cy="4" r="3" fill="#b3bfd9" />
      <path d="M0 14V9l4-2h6v7z" fill="#b3bfd9" />
      <path d="M6.500 9h9v6.500h-9z" fill="#fff" />
      <path d="M7 9.500h3v2.500H7v2.500h3.500M12 9.500h3v2.500h-3v2.500h3.500" stroke="#8f9fc4" />
    </Svg>
    <Svg>
      <path d="M5 1c1 2 5 2 6 0l5 3-1.500 4-2.500-1v8H4V7L1.500 8 0 4z" fill="#1f74cc" />
    </Svg>
    <Svg>
      <path d="M2 14l8-8" stroke="#1f74cc" strokeWidth="3" strokeLinecap="round" />
      <path d="M14.500 4L12 6.500 9.500 4 12 1.500C8 0 6 4 8 7c2 2 8 2 6.500-3z" fill="#1f74cc" />
    </Svg>
  </div>
);

export default function App() {
  return (
    <div className={`relative flex h-screen flex-col overflow-hidden bg-[#f0f0f0] text-[12px] leading-4 text-black ${UI}`}>
      <TitleBar />
      <MenuBar />
      <ToolBar />
      <main className="flex min-h-0 flex-1">
        <NavPanel />
        <div className="ml-[6px] flex min-w-0 flex-1 flex-col">
          <ComponentBar />
          <div className="flex min-h-0 flex-1 gap-[4px]">
            <ComponentPanel />
            <PropertyPanel />
          </div>
        </div>
      </main>
      <StatusBar />
      <TaskBar />

      <InputMethodBar />
      <div className="absolute top-[-31px] left-[709px] flex h-[49px] w-[49px] items-end justify-center rounded-full border border-[#8c8c8c] bg-[#3cc355] pb-[2px] font-bold text-white shadow-md">
        65
      </div>
      <svg className="pointer-events-none absolute top-[398px] left-[-4px] h-[75px] w-[170px]" viewBox="0 0 170 75" fill="none" aria-hidden="true">
        <ellipse cx="85" cy="37" rx="80" ry="33" stroke="#f00" strokeWidth="8" />
      </svg>
    </div>
  );
}
